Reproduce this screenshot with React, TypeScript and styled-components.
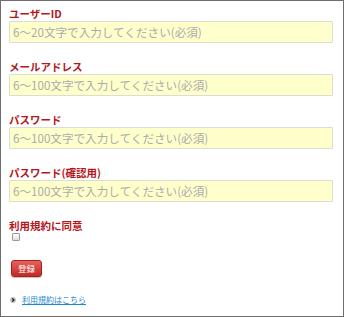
import React from "react";
import styled, { createGlobalStyle } from "styled-components";

const GlobalStyle = createGlobalStyle`
  html, body {
    margin: 0;
    padding: 0;
    background: #ffffff;
  }
  body {
    font-family: "Noto Sans CJK JP", "Noto Sans", "Liberation Sans", sans-serif;
  }
`;

const fields = [
  { label: "ユーザーID", placeholder: "6〜20文字で入力してください(必須)", type: "text" },
  { label: "メールアドレス", placeholder: "6〜100文字で入力してください(必須)", type: "text" },
  { label: "パスワード", placeholder: "6〜100文字で入力してください(必須)", type: "password" },
  { label: "パスワード(確認用)", placeholder: "6〜100文字で入力してください(必須)", type: "password" },
];

const App = () => {
  return (
    <>
      <GlobalStyle />
      <Frame>
        <Form onSubmit={(e) => e.preventDefault()}>
          {fields.map((f) => (
            <Field key={f.label}>
              <Label>{f.label}</Label>
              <TextInput type={f.type} placeholder={f.placeholder} />
            </Field>
          ))}
          <Field>
            <Label>利用規約に同意</Label>
            <Check type="checkbox" />
          </Field>
          <SubmitButton type="submit">登録</SubmitButton>
          <LinkRow>
            <Bullet>
              <svg width="6" height="6" viewBox="0 0 6 6">
                <circle cx="3" cy="3" r="3" fill="#c4c4c4" />
                <path d="M2.2 1.4 L3.9 3 L2.2 4.6" stroke="#111" strokeWidth="1.2" fill="none" />
              </svg>
            </Bullet>
            <TermsLink href="#">利用規約はこちら</TermsLink>
          </LinkRow>
        </Form>
      </Frame>
    </>
  );
};

export default App;

const Frame = styled.div`
  width: 344px;
  height: 317px;
  box-sizing: border-box;
  border: 1px solid #6e6e6e;
  background: #ffffff;
  padding: 6px 10px 0 8px;
`;

const Form = styled.form`
  display: flex;
  flex-direction: column;
  align-items: flex-start;
`;

const Field = styled.div`
  display: flex;
  flex-direction: column;
  align-items: flex-start;
  width: 100%;
  margin-bottom: 17px;
`;

const Label = styled.label`
  display: block;
  height: 14px;
  line-height: 14px;
  font-size: 10.5px;
  font-weight: bold;
  color: #b3161c;
  white-space: nowrap;
`;

const TextInput = styled.input`
  box-sizing: border-box;
  width: 100%;
  height: 22px;
  margin: 0;
  padding: 0 3px;
  border: 1px solid #dcdcd2;
  border-radius: 1px;
  background: #ffffcc;
  font-family: "Noto Sans CJK JP", "Noto Sans", sans-serif;
  font-size: 11.6px;
  color: #333;
  outline: none;
  &::placeholder {
    color: #ababab;
  }
`;

const Check = styled.input`
  appearance: none;
  box-sizing: border-box;
  width: 8px;
  height: 8px;
  margin: 0 0 0 3px;
  border: 1px solid #9a9a9a;
  border-radius: 1px;
  background: linear-gradient(#ffffff, #dedede);
  &:checked {
    background: #6a9ad8;
  }
`;

const SubmitButton = styled.button`
  box-sizing: border-box;
  width: 31px;
  height: 17px;
  margin: 2px 0 0 2px;
  padding: 0;
  border: 1px solid #a8201c;
  border-radius: 3px;
  background: linear-gradient(#e6615b, #c32a25);
  box-shadow: 0 1px 1px rgba(0, 0, 0, 0.25);
  color: #ffffff;
  font-family: "Noto Sans CJK JP", sans-serif;
  font-size: 8.5px;
  line-height: 15px;
  cursor: pointer;
`;

const LinkRow = styled.div`
  display: flex;
  align-items: center;
  gap: 6px;
  margin-top: 16px;
  height: 14px;
`;

const Bullet = styled.span`
  display: flex;
  width: 6px;
  height: 6px;
  margin-left: 1px;
`;

const TermsLink = styled.a`
  font-size: 8px;
  line-height: 14px;
  color: #1e88cf;
  text-decoration: underline;
`;
